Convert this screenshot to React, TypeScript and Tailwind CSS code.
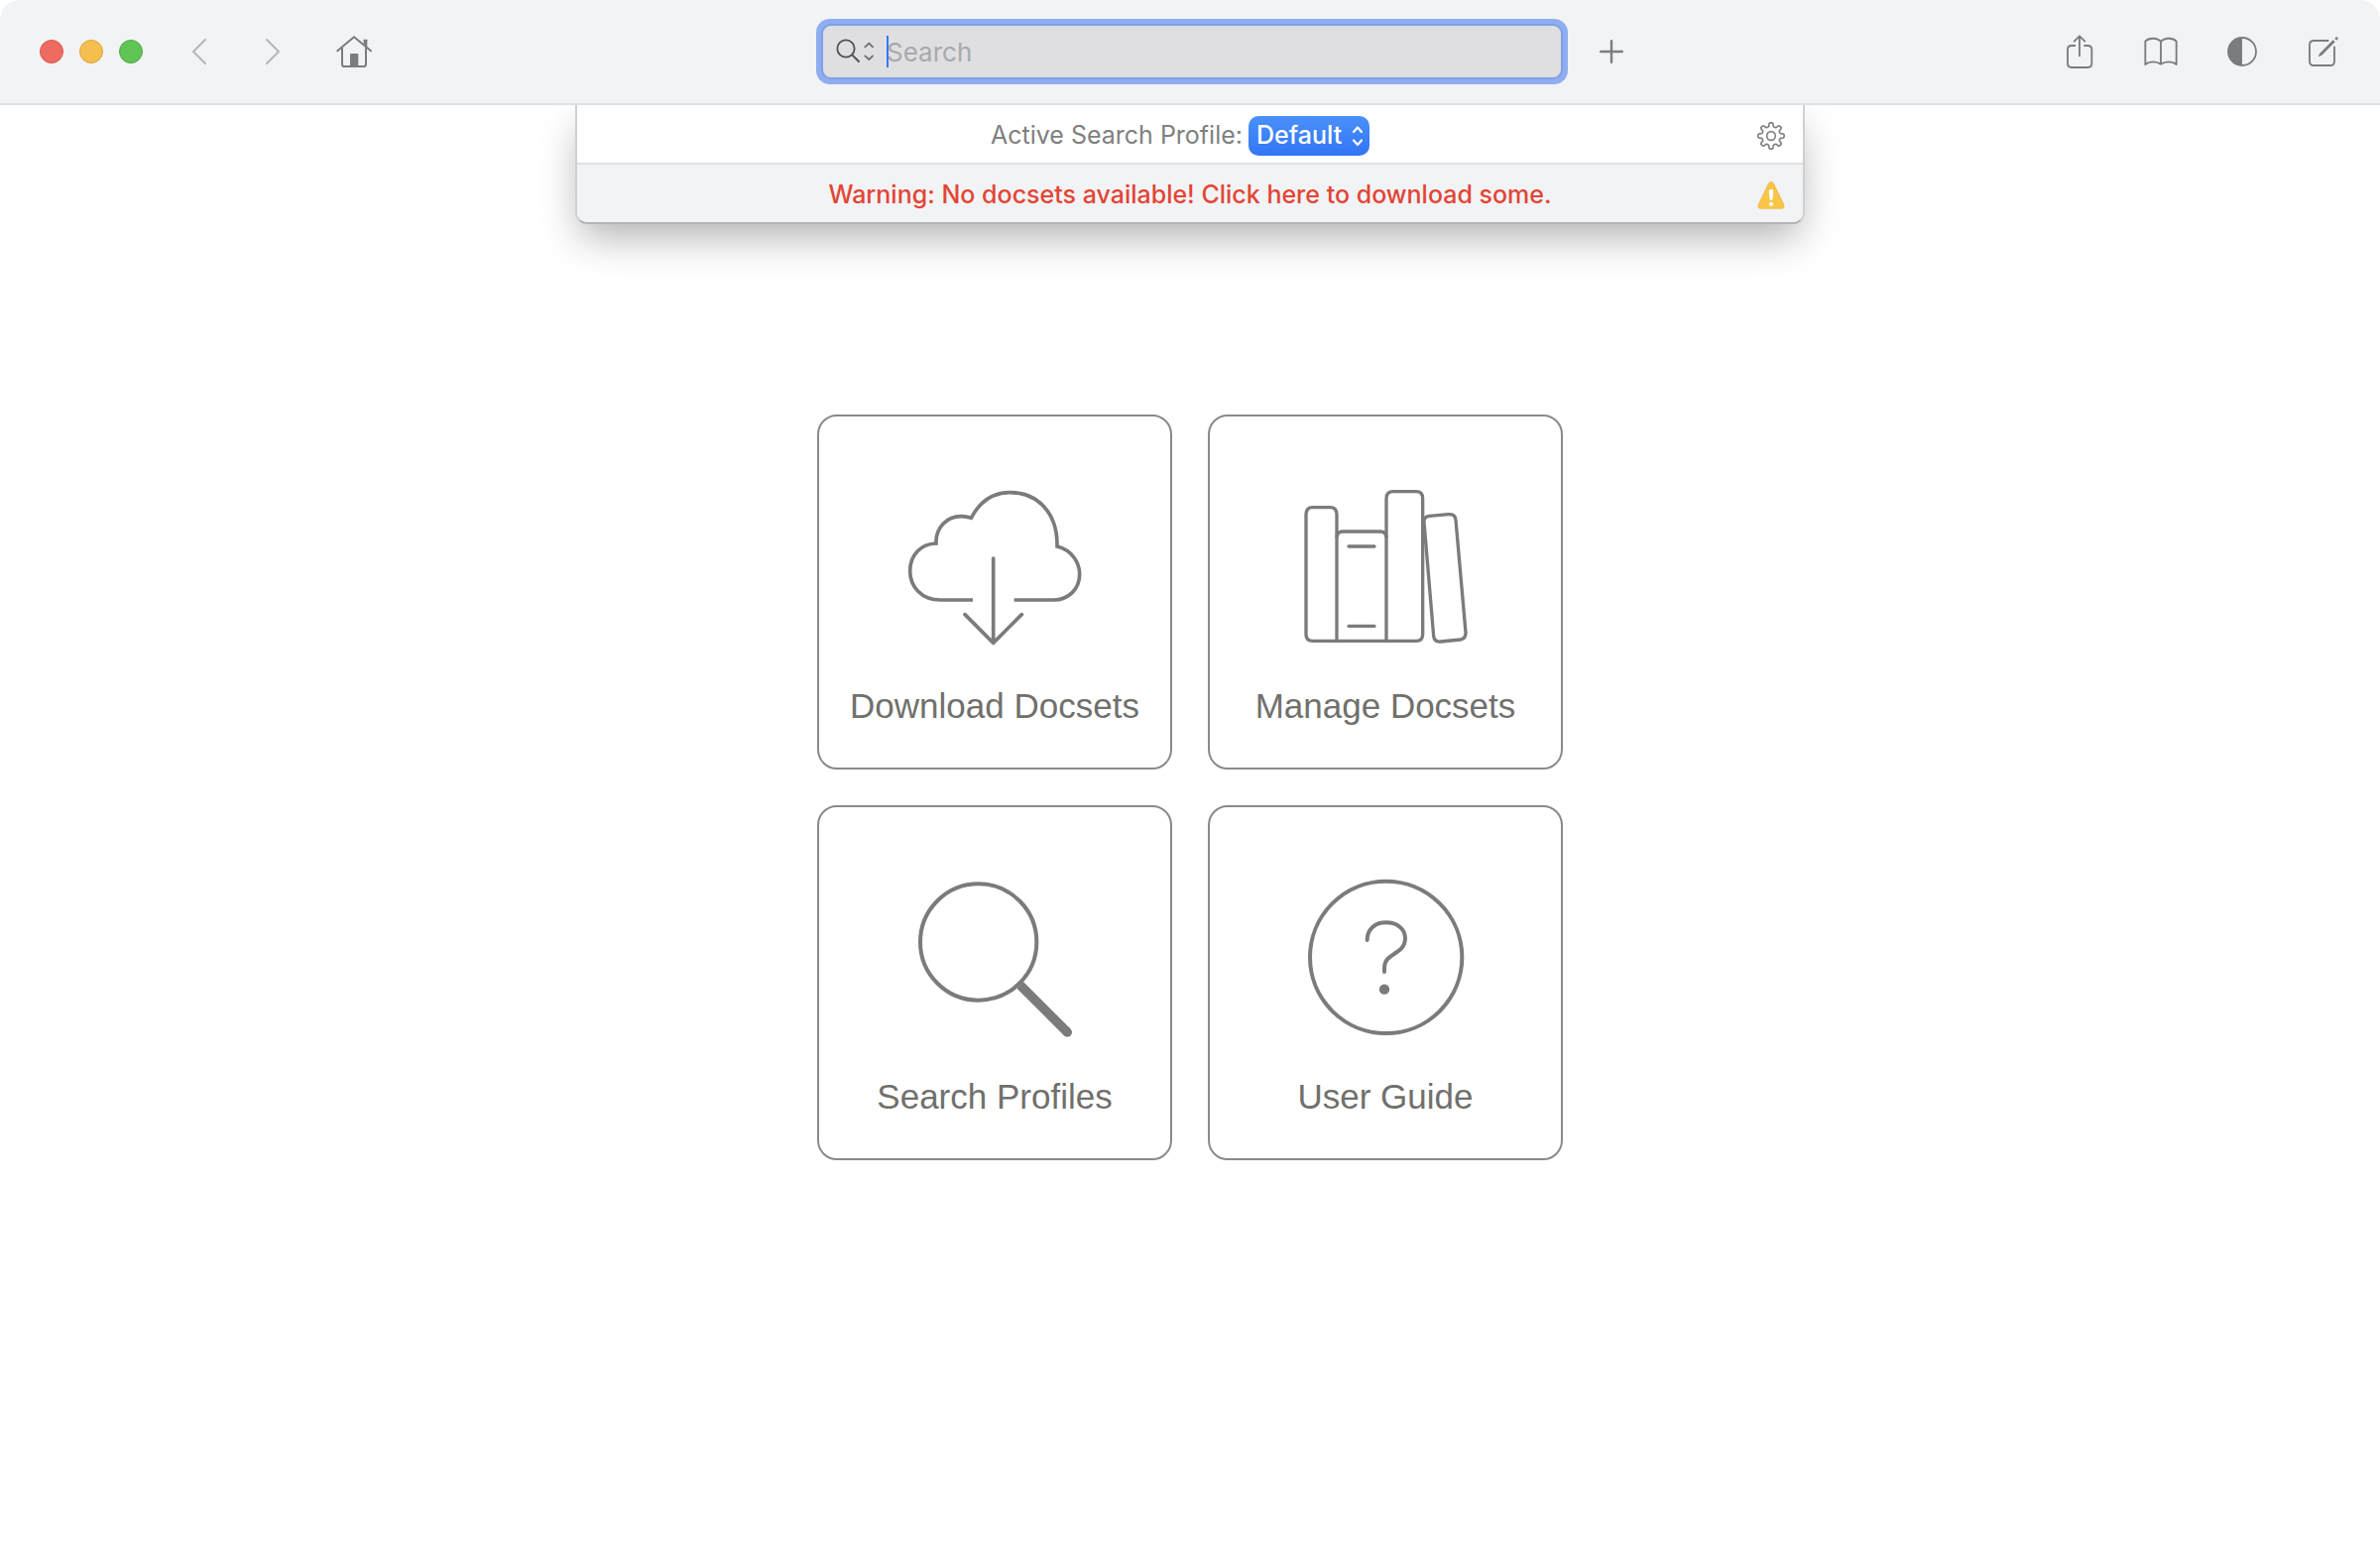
import React from "react";

type IconProps = { className?: string };

function BackIcon() {
  return (
    <svg viewBox="579 114 48 84" className="h-7 w-4" fill="none" stroke="#b5b6b8" strokeWidth="6" strokeLinecap="round" strokeLinejoin="round">
      <path d="M621 120 585 156 621 192" />
    </svg>
  );
}

function ForwardIcon() {
  return (
    <svg viewBox="801 114 48 84" className="h-7 w-4" fill="none" stroke="#b5b6b8" strokeWidth="6" strokeLinecap="round" strokeLinejoin="round">
      <path d="M807 120 843 156 807 192" />
    </svg>
  );
}

function HomeIcon() {
  return (
    <svg viewBox="1008 93 126 126" className="size-[42px]" fill="none" stroke="#7b7c7e" strokeWidth="6" strokeLinecap="round" strokeLinejoin="round">
      <path d="M1021 154 1071 112 1122 154" />
      <path d="M1035 146V194Q1035 201 1042 201H1100Q1107 201 1107 194V146" />
      <path d="M1059 202V165Q1059 162 1062 162H1081Q1084 162 1084 165V202Z" fill="#7b7c7e" stroke="none" />
      <path d="M1100 133V121Q1100 119 1102 119H1109Q1111 119 1111 121V142Z" fill="#7b7c7e" stroke="none" />
    </svg>
  );
}

function PlusIcon() {
  return (
    <svg viewBox="0 0 24 24" className="size-6" fill="none" stroke="#7b7c7e" strokeWidth="2.4" strokeLinecap="round">
      <path d="M12 1.2V22.8M1.2 12H22.8" />
    </svg>
  );
}

function ShareIcon() {
  return (
    <svg viewBox="108 93 126 126" className="size-[42px]" fill="none" stroke="#7b7c7e" strokeWidth="5.6" strokeLinecap="butt" strokeLinejoin="round">
      <path d="M159 138H147Q135 138 135 150V192Q135 204 147 204H196Q208 204 208 192V150Q208 138 196 138H184" />
      <path d="M171 169V109M155 125 171 109 187 125" strokeLinecap="round" />
    </svg>
  );
}

function BookIcon() {
  return (
    <svg viewBox="354 93 126 126" className="size-[42px]" fill="none" stroke="#7b7c7e" strokeWidth="5.6" strokeLinecap="round" strokeLinejoin="round">
      <path d="M417 126C406 113 381 113 370 125V195C383 184 405 185 417 194C429 185 451 184 464 195V125C453 113 428 113 417 126V194" />
    </svg>
  );
}

function ContrastIcon() {
  return (
    <svg viewBox="600 93 126 126" className="size-[42px]" fill="none" stroke="#7b7c7e" strokeWidth="5.4">
      <circle cx="663" cy="156" r="42" />
      <path d="M663 114A42 42 0 0 0 663 198Z" fill="#7b7c7e" stroke="none" />
    </svg>
  );
}

function ComposeIcon() {
  return (
    <svg viewBox="846 93 126 126" className="size-[42px]" fill="none" stroke="#7b7c7e" strokeWidth="5.6">
      <path d="M925 123H880Q867 123 867 136V185Q867 198 880 198H929Q942 198 942 185V140" />
      <path d="M938 121 944 127 904 167 895 171Q893 171 894 169L898 161Z" fill="#7b7c7e" stroke="none" />
      <path d="M945 114 948 112Q950 111 952 113L953 115Q954 117 952 119L949 122 943 117Z" fill="#7b7c7e" stroke="none" />
    </svg>
  );
}

function SearchScopeIcon() {
  return (
    <svg viewBox="129 114 117 84" className="h-7 w-[39px]" fill="none" strokeLinecap="round" strokeLinejoin="round">
      <circle cx="159" cy="147" r="26" stroke="#4f4f51" strokeWidth="5.4" />
      <path d="M178 166 198 186" stroke="#4f4f51" strokeWidth="6" />
      <path d="M217 142 229 131 240 142M217 169 229 180 240 169" stroke="#6f6f71" strokeWidth="5.4" />
    </svg>
  );
}

function PopupArrows({ className }: IconProps) {
  return (
    <svg viewBox="0 0 12 22" className={className} fill="none" stroke="#fff" strokeWidth="2.2" strokeLinecap="round" strokeLinejoin="round">
      <path d="M2 7 6 2.5 10 7M2 15.5 6 20 10 15.5" />
    </svg>
  );
}

const gearPath = (() => {
  const at = (radius: number, degrees: number) => {
    const a = ((degrees - 90) * Math.PI) / 180;
    return `${(42 + radius * Math.cos(a)).toFixed(1)} ${(42 + radius * Math.sin(a)).toFixed(1)}`;
  };
  let d = "";
  for (let i = 0; i < 8; i++) {
    const t = i * 45;
    d += `${i === 0 ? "M" : "L"}${at(30, t - 13)} L${at(36, t - 10)} Q${at(39.5, t - 8)} ${at(39.5, t - 4)} L${at(39.5, t + 4)} Q${at(39.5, t + 8)} ${at(36, t + 10)} L${at(30, t + 13)} Q${at(26, t + 22.5)} ${at(30, t + 32)} `;
  }
  return d + "Z";
})();

function GearIcon() {
  return (
    <svg viewBox="0 0 84 84" className="size-7" fill="none" stroke="#808080" strokeWidth="5" strokeLinejoin="round">
      <path d={gearPath} />
      <circle cx="42" cy="42" r="13" />
    </svg>
  );
}

function WarningIcon() {
  return (
    <svg viewBox="156 275 84 86" className="size-7 shrink-0">
      <path d="M190 281Q198 271 206 281L237 346Q241 359 229 359H167Q155 359 159 346Z" fill="#f7c548" stroke="#efae42" strokeWidth="2" />
      <path d="M191 306Q191 299 198 299Q205 299 205 306L202.500 329Q202 333 198 333Q194 333 193.500 329Z" fill="#fff" />
      <circle cx="198" cy="345" r="6.500" fill="#fff" />
    </svg>
  );
}

function CloudDownloadArt() {
  return (
    <svg viewBox="309 240 540 540" className="size-[180px]" fill="none" stroke="#7b7b7b" strokeWidth="11">
      <path d="M513 615H415C357 615 323 574 323 527C323 479 356 445 402 444C400 395 435 362 478 362C489 362 499 364 508 367C534 317 576 290 627 290C707 290 770 350 768 453C811 464 836 500 836 537C836 582 802 615 758 615H638" />
      <path d="M575 489V745M489 659 575 745 661 659" strokeLinecap="round" strokeLinejoin="round" />
    </svg>
  );
}

function BooksArt() {
  return (
    <svg viewBox="321 240 540 540" className="size-[180px]" fill="none" stroke="#7b7b7b" strokeWidth="10">
      <path d="M444 740V357Q444 335 424 335H371Q351 335 351 357V719Q351 739 372 739H684Q704 739 704 719V308Q704 287 684 287H615Q594 287 594 308V740" />
      <path d="M444 427Q444 408 462 408H575Q594 408 594 427" />
      <path d="M480 453H558M480 694H558" strokeLinecap="round" />
      <path d="M708 379Q707 363 724 361L782 356Q802 354 804 373L834 713Q835 732 818 735L758 741Q739 743 737 724Z" />
    </svg>
  );
}

function MagnifierArt() {
  return (
    <svg viewBox="309 222 540 540" className="size-[180px]" fill="none" stroke="#7b7b7b" strokeWidth="12">
      <circle cx="530" cy="450" r="176" />
      <path d="M656 580 798 722" strokeWidth="28" />
      <circle cx="799" cy="723" r="14" fill="#7b7b7b" stroke="none" />
    </svg>
  );
}

function QuestionArt() {
  return (
    <svg viewBox="321 222 540 540" className="size-[180px]" fill="none" stroke="#7b7b7b" strokeWidth="12">
      <circle cx="593" cy="496" r="230" />
      <path d="M536 444C536 412 558 391 593 391C629 391 651 412 651 438C651 490 588 480 588 528V540" strokeLinecap="round" />
      <circle cx="588" cy="593" r="15.500" fill="#7b7b7b" stroke="none" />
    </svg>
  );
}

const cards = [
  { label: "Download Docsets", Art: CloudDownloadArt },
  { label: "Manage Docsets", Art: BooksArt },
  { label: "Search Profiles", Art: MagnifierArt },
  { label: "User Guide", Art: QuestionArt },
];

const tools = [
  { label: "Share", Icon: ShareIcon },
  { label: "Bookmarks", Icon: BookIcon },
  { label: "Appearance", Icon: ContrastIcon },
  { label: "Annotate", Icon: ComposeIcon },
];

export default function App() {
  return (
    <div className="min-h-screen bg-white font-['Inter',sans-serif]">
      <header className="relative z-10 flex items-center rounded-t-[20px] border-b-2 border-[#dfe0e2] bg-[#f2f3f5] py-[19px] pr-9 pl-10">
        <nav className="flex flex-1 items-center" aria-label="Window and history">
          <div className="flex gap-4">
            <button aria-label="Close" className="size-6 rounded-full border border-[#d8564b] bg-[#ed6b60]" />
            <button aria-label="Minimize" className="size-6 rounded-full border border-[#dba544] bg-[#f5bf4f]" />
            <button aria-label="Zoom" className="size-6 rounded-full border border-[#51a73f] bg-[#61c555]" />
          </div>
          <button aria-label="Back" className="ml-[49px]">
            <BackIcon />
          </button>
          <button aria-label="Forward" className="ml-[58px]">
            <ForwardIcon />
          </button>
          <button aria-label="Home" className="ml-[53px]">
            <HomeIcon />
          </button>
        </nav>

        <div className="w-[758px] rounded-[14px] bg-[#8fadf1] p-[5px]">
          <div className="flex items-center rounded-[10px] border-2 border-[#809fe6] bg-[#dfdfe1] pr-3 pl-[13px]">
            <button aria-label="Search scope">
              <SearchScopeIcon />
            </button>
            <div className="relative ml-3 flex flex-1 items-center">
              <input
                type="text"
                aria-label="Search"
                placeholder="Search"
                className="h-[52px] w-full bg-transparent text-[26px] text-neutral-800 outline-none placeholder:text-[#a9a9ab]"
              />
              <span className="absolute left-0 h-8 w-0.5 bg-[#3478f6]" />
            </div>
          </div>
        </div>

        <div className="flex flex-1 items-center justify-between">
          <button aria-label="New tab" className="ml-8">
            <PlusIcon />
          </button>
          <div className="flex gap-10">
            {tools.map(({ label, Icon }) => (
              <button key={label} aria-label={label}>
                <Icon />
              </button>
            ))}
          </div>
        </div>
      </header>

      <main>
        <section className="mx-auto w-full max-w-[1240px] rounded-b-xl border-2 border-t-0 border-[#d0d0d1] border-b-[#b4b4b4] bg-white shadow-[0_18px_40px_-6px_rgba(0,0,0,0.32)]">
          <div className="flex h-15 items-center border-b-2 border-[#dfe0e2] px-[18px] pt-1">
            <div className="flex flex-1 items-center justify-center gap-1.5 pl-2 text-[25px]">
              <label htmlFor="profile" className="text-[#808080]">
                Active Search Profile:
              </label>
              <div className="relative flex items-center">
                <select
                  id="profile"
                  className="h-10 w-[122px] appearance-none rounded-[10px] bg-linear-to-b from-[#4a90f9] to-[#3375f6] pl-2 font-medium text-white"
                >
                  <option>Default</option>
                </select>
                <PopupArrows className="pointer-events-none absolute right-1.5 h-[22px] w-3" />
              </div>
            </div>
            <button aria-label="Profile settings">
              <GearIcon />
            </button>
          </div>
          <div className="flex h-[58px] items-center rounded-b-[10px] bg-[#f2f3f5] px-[18px] pt-1">
            <button className="flex-1 pl-7 text-center text-[25px] font-medium text-[#e24535]">
              Warning: No docsets available! Click here to download some.
            </button>
            <WarningIcon />
          </div>
        </section>

        <section className="mt-48 mb-10 flex justify-center font-['Liberation_Sans',Arial,sans-serif]">
          <div className="grid grid-cols-2 gap-9">
            {cards.map(({ label, Art }) => (
              <button
                key={label}
                className="flex size-[358px] flex-col items-center rounded-[20px] border-2 border-[#8a8a8a] bg-white pt-15 text-[35px] leading-10 text-[#70706c]"
              >
                <Art />
                <span className="mt-8">{label}</span>
              </button>
            ))}
          </div>
        </section>
      </main>
    </div>
  );
}
